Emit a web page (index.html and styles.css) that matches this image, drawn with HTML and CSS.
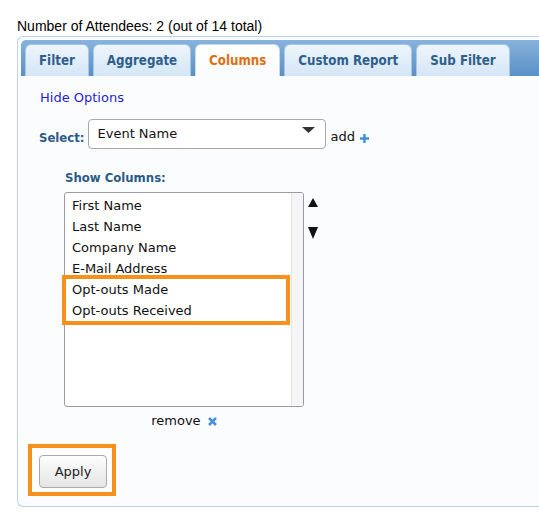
FILE: index.html
```html
<!DOCTYPE html>
<html>
<head>
<meta charset="utf-8">
<link rel="stylesheet" href="styles.css">
</head>
<body>
<div class="count">Number of Attendees: 2 (out of 14 total)</div>
<div class="panel">
  <div class="tabs">
    <div class="tab">Filter</div>
    <div class="tab">Aggregate</div>
    <div class="tab active">Columns</div>
    <div class="tab">Custom Report</div>
    <div class="tab">Sub Filter</div>
  </div>
  <div class="content">
    <a class="hide">Hide Options</a>
    <div class="select-row">
      <span class="label">Select:</span>
      <div class="select">
        <span class="select-text">Event Name</span>
        <svg class="caret" width="13" height="6" viewBox="0 0 13 6"><path d="M0 0 H13 L6.5 6 Z" fill="#333"/></svg>
      </div>
      <span class="add">add
        <svg class="plus" width="9" height="9" viewBox="0 0 9 9"><path d="M4.5 0 V9 M0 4.5 H9" stroke="#3d8fde" stroke-width="2.4"/></svg>
      </span>
    </div>
    <div class="cols">
      <div class="label show">Show Columns:</div>
      <div class="list-row">
        <div class="listbox">
          <div class="items">
            <div class="item">First Name</div>
            <div class="item">Last Name</div>
            <div class="item">Company Name</div>
            <div class="item">E-Mail Address</div>
            <div class="marked">
              <div class="item">Opt-outs Made</div>
              <div class="item">Opt-outs Received</div>
            </div>
          </div>
          <div class="track"></div>
        </div>
        <div class="arrows">
          <svg width="10" height="9" viewBox="0 0 10 9"><path d="M5 0 L10 9 H0 Z" fill="#111"/></svg>
          <svg width="10" height="12" viewBox="0 0 10 12"><path d="M0 0 H10 L5 12 Z" fill="#111"/></svg>
        </div>
      </div>
      <div class="remove">remove
        <svg class="x" width="9" height="9" viewBox="0 0 9 9"><path d="M1 1 L8 8 M8 1 L1 8" stroke="#4a90d9" stroke-width="2.6"/></svg>
      </div>
    </div>
    <div class="apply-wrap"><button class="apply">Apply</button></div>
  </div>
</div>
</body>
</html>
```
FILE: styles.css
```css
html, body {
  margin: 0;
  padding: 0;
  background: #ffffff;
}
body {
  width: 539px;
  height: 522px;
  overflow: hidden;
  padding: 18px 0 0 17px;
  box-sizing: border-box;
  font-family: "DejaVu Sans", sans-serif;
}
.count {
  font-family: "Liberation Sans", Arial, sans-serif;
  font-size: 14px;
  line-height: 16px;
  color: #000;
}
.panel {
  margin-top: 2px;
  border: 1px solid #bcd3e9;
  border-right: none;
  border-radius: 6px 0 0 6px;
  padding: 3px 0 3px 3px;
  background: #fbfcfd;
}
.tabs {
  display: flex;
  align-items: flex-end;
  gap: 4px;
  height: 36px;
  box-sizing: border-box;
  padding: 4px 0 0 4px;
  background: linear-gradient(#87b3dd, #5b8fc5);
  border-radius: 5px 0 0 0;
}
.tab {
  height: 32px;
  box-sizing: border-box;
  line-height: 31px;
  padding: 0 13px;
  border: 1px solid #a6c7e6;
  border-bottom: none;
  border-radius: 6px 6px 0 0;
  background: linear-gradient(#eef5fc, #d4e6f6);
  font-family: "DejaVu Sans Condensed", "DejaVu Sans", sans-serif;
  font-weight: bold;
  font-size: 13.2px;
  color: #2f5e8c;
  white-space: nowrap;
}
.tab.active {
  background: linear-gradient(#ffffff, #f9fbfd);
  color: #e06f12;
  border-color: #c9dcef;
}
.content {
  padding: 14px 0 7px 7px;
  font-size: 13px;
  line-height: 16px;
  color: #111;
}
.hide {
  display: block;
  margin-left: 12px;
  color: #1f1fd9;
  text-decoration: none;
}
.label {
  font-family: "DejaVu Sans Condensed", "DejaVu Sans", sans-serif;
  font-weight: bold;
  font-size: 13px;
  color: #2c5a86;
}
.select-row {
  display: flex;
  align-items: flex-end;
  margin: 13px 0 0 11px;
}
.select-row .label {
  padding-bottom: 3px;
  margin-right: 3px;
}
.select {
  width: 238px;
  height: 30px;
  box-sizing: border-box;
  border: 1px solid #a8a8a8;
  border-radius: 4px;
  background: #fff;
  display: flex;
  align-items: center;
  justify-content: space-between;
  padding: 0 10px 0 9px;
}
.select-text {
  color: #111;
}
.caret {
  margin-bottom: 9px;
}
.add {
  margin-left: 5px;
  padding-bottom: 4px;
  color: #111;
  display: flex;
  align-items: center;
  gap: 5px;
}
.plus {
  margin-top: 2px;
}
.cols {
  margin-left: 36px;
  margin-top: 21px;
  width: 260px;
}
.show {
  padding-left: 1px;
}
.list-row {
  display: flex;
  margin-top: 6px;
}
.listbox {
  width: 240px;
  height: 215px;
  box-sizing: border-box;
  border: 1px solid #9b9ba6;
  border-radius: 3px;
  background: #fff;
  display: flex;
}
.items {
  flex: 1;
  padding-top: 2px;
}
.item {
  line-height: 21px;
  padding-left: 7px;
  color: #111;
  white-space: nowrap;
}
.marked {
  margin: -4px 1px -4px -3px;
  border: 4px solid #f8901c;
}
.marked .item {
  padding-left: 6px;
}
.track {
  width: 11px;
  background: #f6f6f6;
  border-left: 1px solid #e6e6e6;
  border-radius: 0 2px 2px 0;
}
.arrows {
  display: flex;
  flex-direction: column;
  gap: 20px;
  padding: 6px 0 0 4px;
}
.remove {
  width: 240px;
  margin-top: 6px;
  text-align: center;
  color: #111;
}
.x {
  margin-left: 3px;
  vertical-align: -1px;
}
.apply-wrap {
  display: inline-block;
  margin-top: 15px;
  border: 4px solid #f8901c;
  background: #ffffff;
  padding: 7px 5px 4px 7px;
}
.apply {
  display: block;
  width: 68px;
  height: 33px;
  border: 1px solid #aaaaaa;
  border-radius: 4px;
  background: linear-gradient(#fdfdfd, #e5e5e5);
  font-family: "DejaVu Sans", sans-serif;
  font-size: 13px;
  color: #222;
  padding: 0;
}
```
